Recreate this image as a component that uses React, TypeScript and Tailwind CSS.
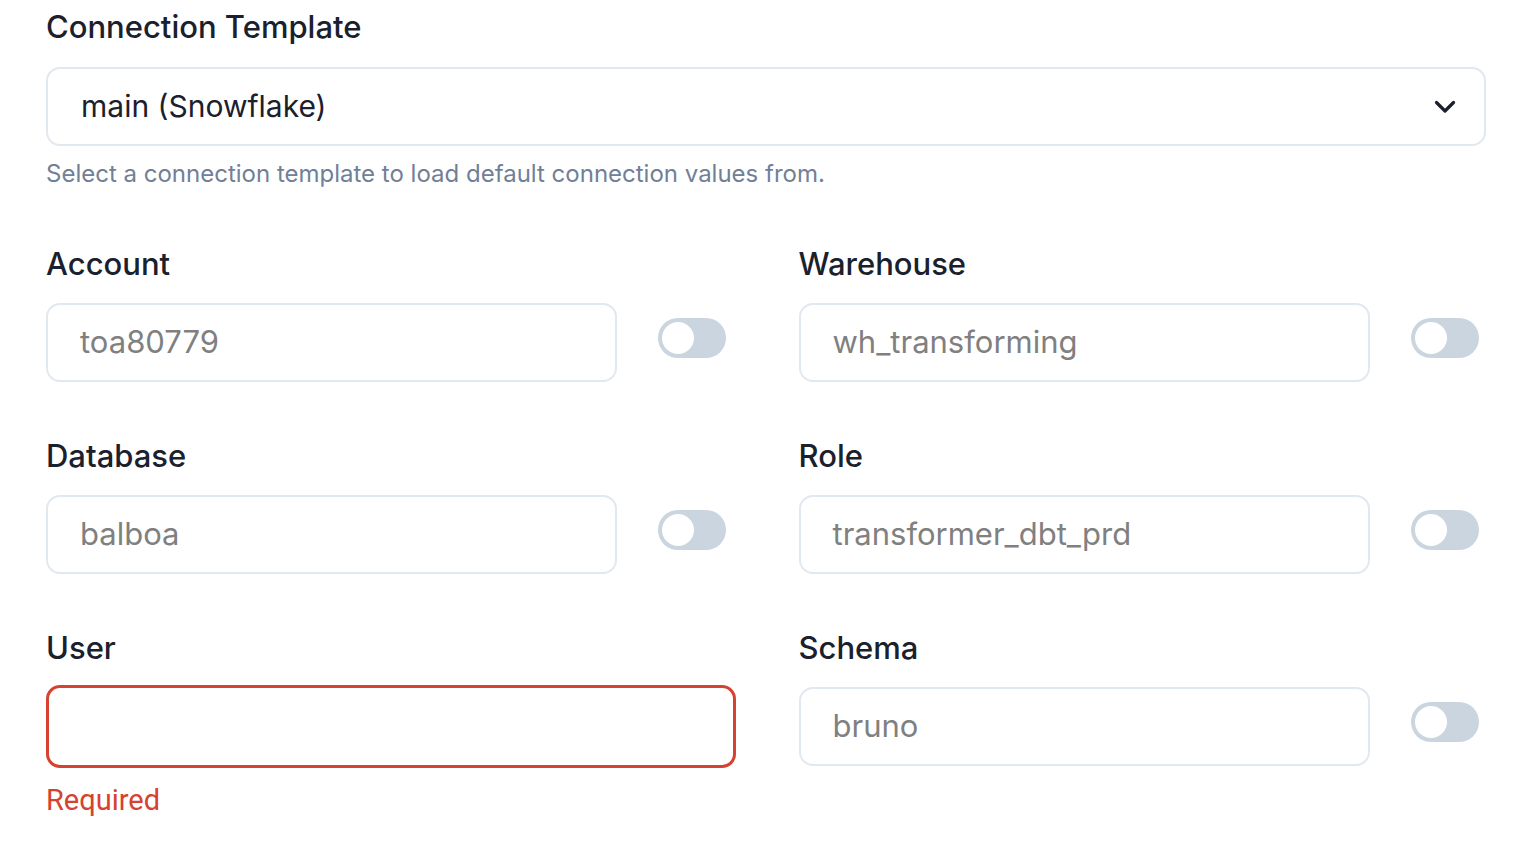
import React from 'react';

const font = { fontFamily: 'Inter, "Noto Sans", sans-serif' };

function Toggle() {
  return (
    <div className="ml-[41px] mt-[15px] flex h-[40px] w-[68px] shrink-0 items-center self-start rounded-full bg-[#cbd5e0] p-[4px]">
      <div className="h-[32px] w-[32px] rounded-full bg-white" />
    </div>
  );
}

function Field({ label, placeholder }: { label: string; placeholder: string }) {
  return (
    <div className="flex flex-col">
      <label className="mb-[18px] text-[31px] leading-[42px] font-medium text-[#1a202c]">{label}</label>
      <div className="flex">
        <div className="flex h-[79px] w-[571px] items-center rounded-[14px] border-2 border-[#e2e8f0] px-[32px]">
          <span className="text-[31px] text-[#808080]">{placeholder}</span>
        </div>
        <Toggle />
      </div>
    </div>
  );
}

export default function App() {
  return (
    <div className="min-h-screen bg-white pl-[46px] pt-[6px]" style={font}>
      <label className="block text-[31px] leading-[42px] font-medium text-[#1a202c]">Connection Template</label>
      <div className="mt-[19px] flex h-[79px] w-[1440px] items-center justify-between rounded-[14px] border-2 border-[#e2e8f0] pl-[33px] pr-[28px]">
        <span className="text-[30px] text-[#1a202c]">main (Snowflake)</span>
        <svg width="22" height="14" viewBox="0 0 22 14" fill="none">
          <path d="M2.5 2.5 L11 11 L19.5 2.5" stroke="#1a202c" strokeWidth="3.2" strokeLinecap="round" strokeLinejoin="round" />
        </svg>
      </div>
      <p className="mt-[12px] text-[24px] leading-[32px] text-[#718096]">
        Select a connection template to load default connection values from.
      </p>

      <div className="mt-[53px] grid w-[1441px] grid-cols-2 gap-x-[64px] gap-y-[53px]">
        <Field label="Account" placeholder="toa80779" />
        <Field label="Warehouse" placeholder="wh_transforming" />
        <Field label="Database" placeholder="balboa" />
        <Field label="Role" placeholder="transformer_dbt_prd" />
        <div className="flex flex-col">
          <label className="mb-[16px] text-[31px] leading-[42px] font-medium text-[#1a202c]">User</label>
          <div className="h-[83px] w-[690px] rounded-[14px] border-[3px] border-[#d64230]" />
          <span
            className="mt-[14px] text-[29px] leading-[36px] text-[#d64230]"
            style={{ fontFamily: 'Roboto, sans-serif' }}
          >
            Required
          </span>
        </div>
        <Field label="Schema" placeholder="bruno" />
      </div>
    </div>
  );
}
